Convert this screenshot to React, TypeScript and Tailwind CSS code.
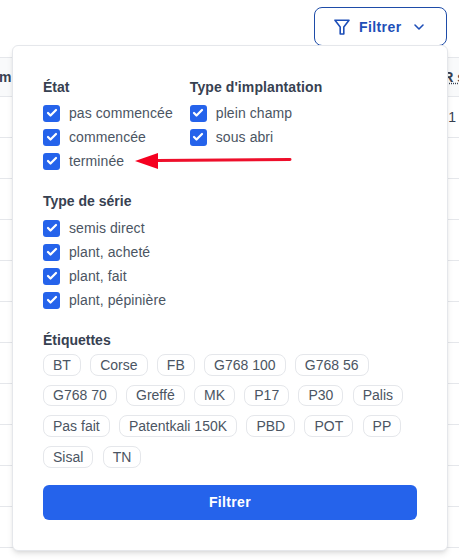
import { Check, ChevronDown } from "lucide-react";

const etats = ["pas commencée", "commencée", "terminée"];
const implantations = ["plein champ", "sous abri"];
const series = ["semis direct", "plant, acheté", "plant, fait", "plant, pépinière"];
const etiquettes = [
  "BT", "Corse", "FB", "G768 100", "G768 56", "G768 70", "Greffé", "MK", "P17", "P30",
  "Palis", "Pas fait", "Patentkali 150K", "PBD", "POT", "PP", "Sisal", "TN",
];

function CheckRow({ label }: { label: string }) {
  return (
    <label className="flex h-6 items-center gap-[9px] text-sm tracking-[0.08px] text-[#4b5563]">
      <span className="flex h-[17px] w-[17px] items-center justify-center rounded-[3px] bg-[#2563eb]">
        <Check className="h-3 w-3 text-white" strokeWidth={4.5} />
      </span>
      {label}
    </label>
  );
}

export default function App() {
  return (
    <div className="relative h-[560px] w-[459px] overflow-hidden bg-white font-['Liberation_Sans',sans-serif]">
      <div className="flex justify-end pr-[12px] pt-[7px]">
        <button className="flex h-[39px] w-[133px] items-center rounded-lg border border-[#1e4ca8] bg-white pl-[19px] text-sm font-bold tracking-[0.4px] text-[#1e4fb8]">
          <svg width="16" height="16" viewBox="0 0 16 16" fill="none" stroke="currentColor" strokeWidth="1.6" strokeLinejoin="round">
            <path d="M1 1.2 H15 L9.8 8 V15 H6.2 V8 Z" />
          </svg>
          <span className="ml-[9px]">Filtrer</span>
          <ChevronDown className="ml-[10px] h-4 w-4" strokeWidth={2.4} />
        </button>
      </div>

      {/* table behind the menu */}
      <div className="mt-[11px] text-sm text-[#374151]">
        <div className="flex h-[40px] items-center justify-between border-y border-[#e5e7eb] bg-[#f9fafb] font-bold">
          <span className="-ml-[1px]">m</span>
          <span className="-mr-[6px] underline decoration-dotted">R s</span>
        </div>
        <div className="flex h-[41px] items-center justify-end border-b border-[#e5e7eb] pr-[3px]">1</div>
        {[0, 1, 2, 3, 4, 5, 6, 7, 8, 9].map((i) => (
          <div key={i} className="h-[41px] border-b border-[#e5e7eb]" />
        ))}
      </div>

      <div className="absolute left-[12px] top-[45px] w-[436px] rounded-md border border-[#e5e7eb] bg-white px-[30px] pb-[30px] pt-[31px] shadow-md">
        <div className="flex gap-[17px]">
          <div>
            <h3 className="mb-[4px] text-sm font-bold text-[#374151]">État</h3>
            {etats.map((e) => <CheckRow key={e} label={e} />)}
          </div>
          <div>
            <h3 className="mb-[4px] text-sm font-bold tracking-[0.1px] text-[#374151]">Type d'implantation</h3>
            {implantations.map((e) => <CheckRow key={e} label={e} />)}
          </div>
        </div>

        <h3 className="mb-[5px] mt-[18px] text-sm font-bold text-[#374151]">Type de série</h3>
        {series.map((e) => <CheckRow key={e} label={e} />)}

        <h3 className="mt-[18px] text-sm font-bold text-[#374151]">Étiquettes</h3>
        <div className="mt-[4px] flex flex-wrap gap-x-[9.3px] gap-y-[9px]">
          {etiquettes.map((t) => (
            <span key={t} className="flex h-[21.67px] items-center rounded-lg border border-[#e5e7eb] px-[9px] text-sm text-[#4b5563]">
              {t}
            </span>
          ))}
        </div>

        <button className="mt-[17px] h-[35px] w-full rounded-md bg-[#2563eb] text-sm font-bold tracking-wide text-white">
          Filtrer
        </button>
      </div>

      {/* red annotation arrow */}
      <svg className="absolute left-[134px] top-[150px]" width="160" height="24" viewBox="0 0 160 24">
        <path d="M23 10.5 L156 9.5" stroke="#ee0f2b" strokeWidth="3" fill="none" strokeLinecap="round" />
        <path d="M1 11 L24 3 L24 19 Z" fill="#f50020" />
      </svg>
    </div>
  );
}
